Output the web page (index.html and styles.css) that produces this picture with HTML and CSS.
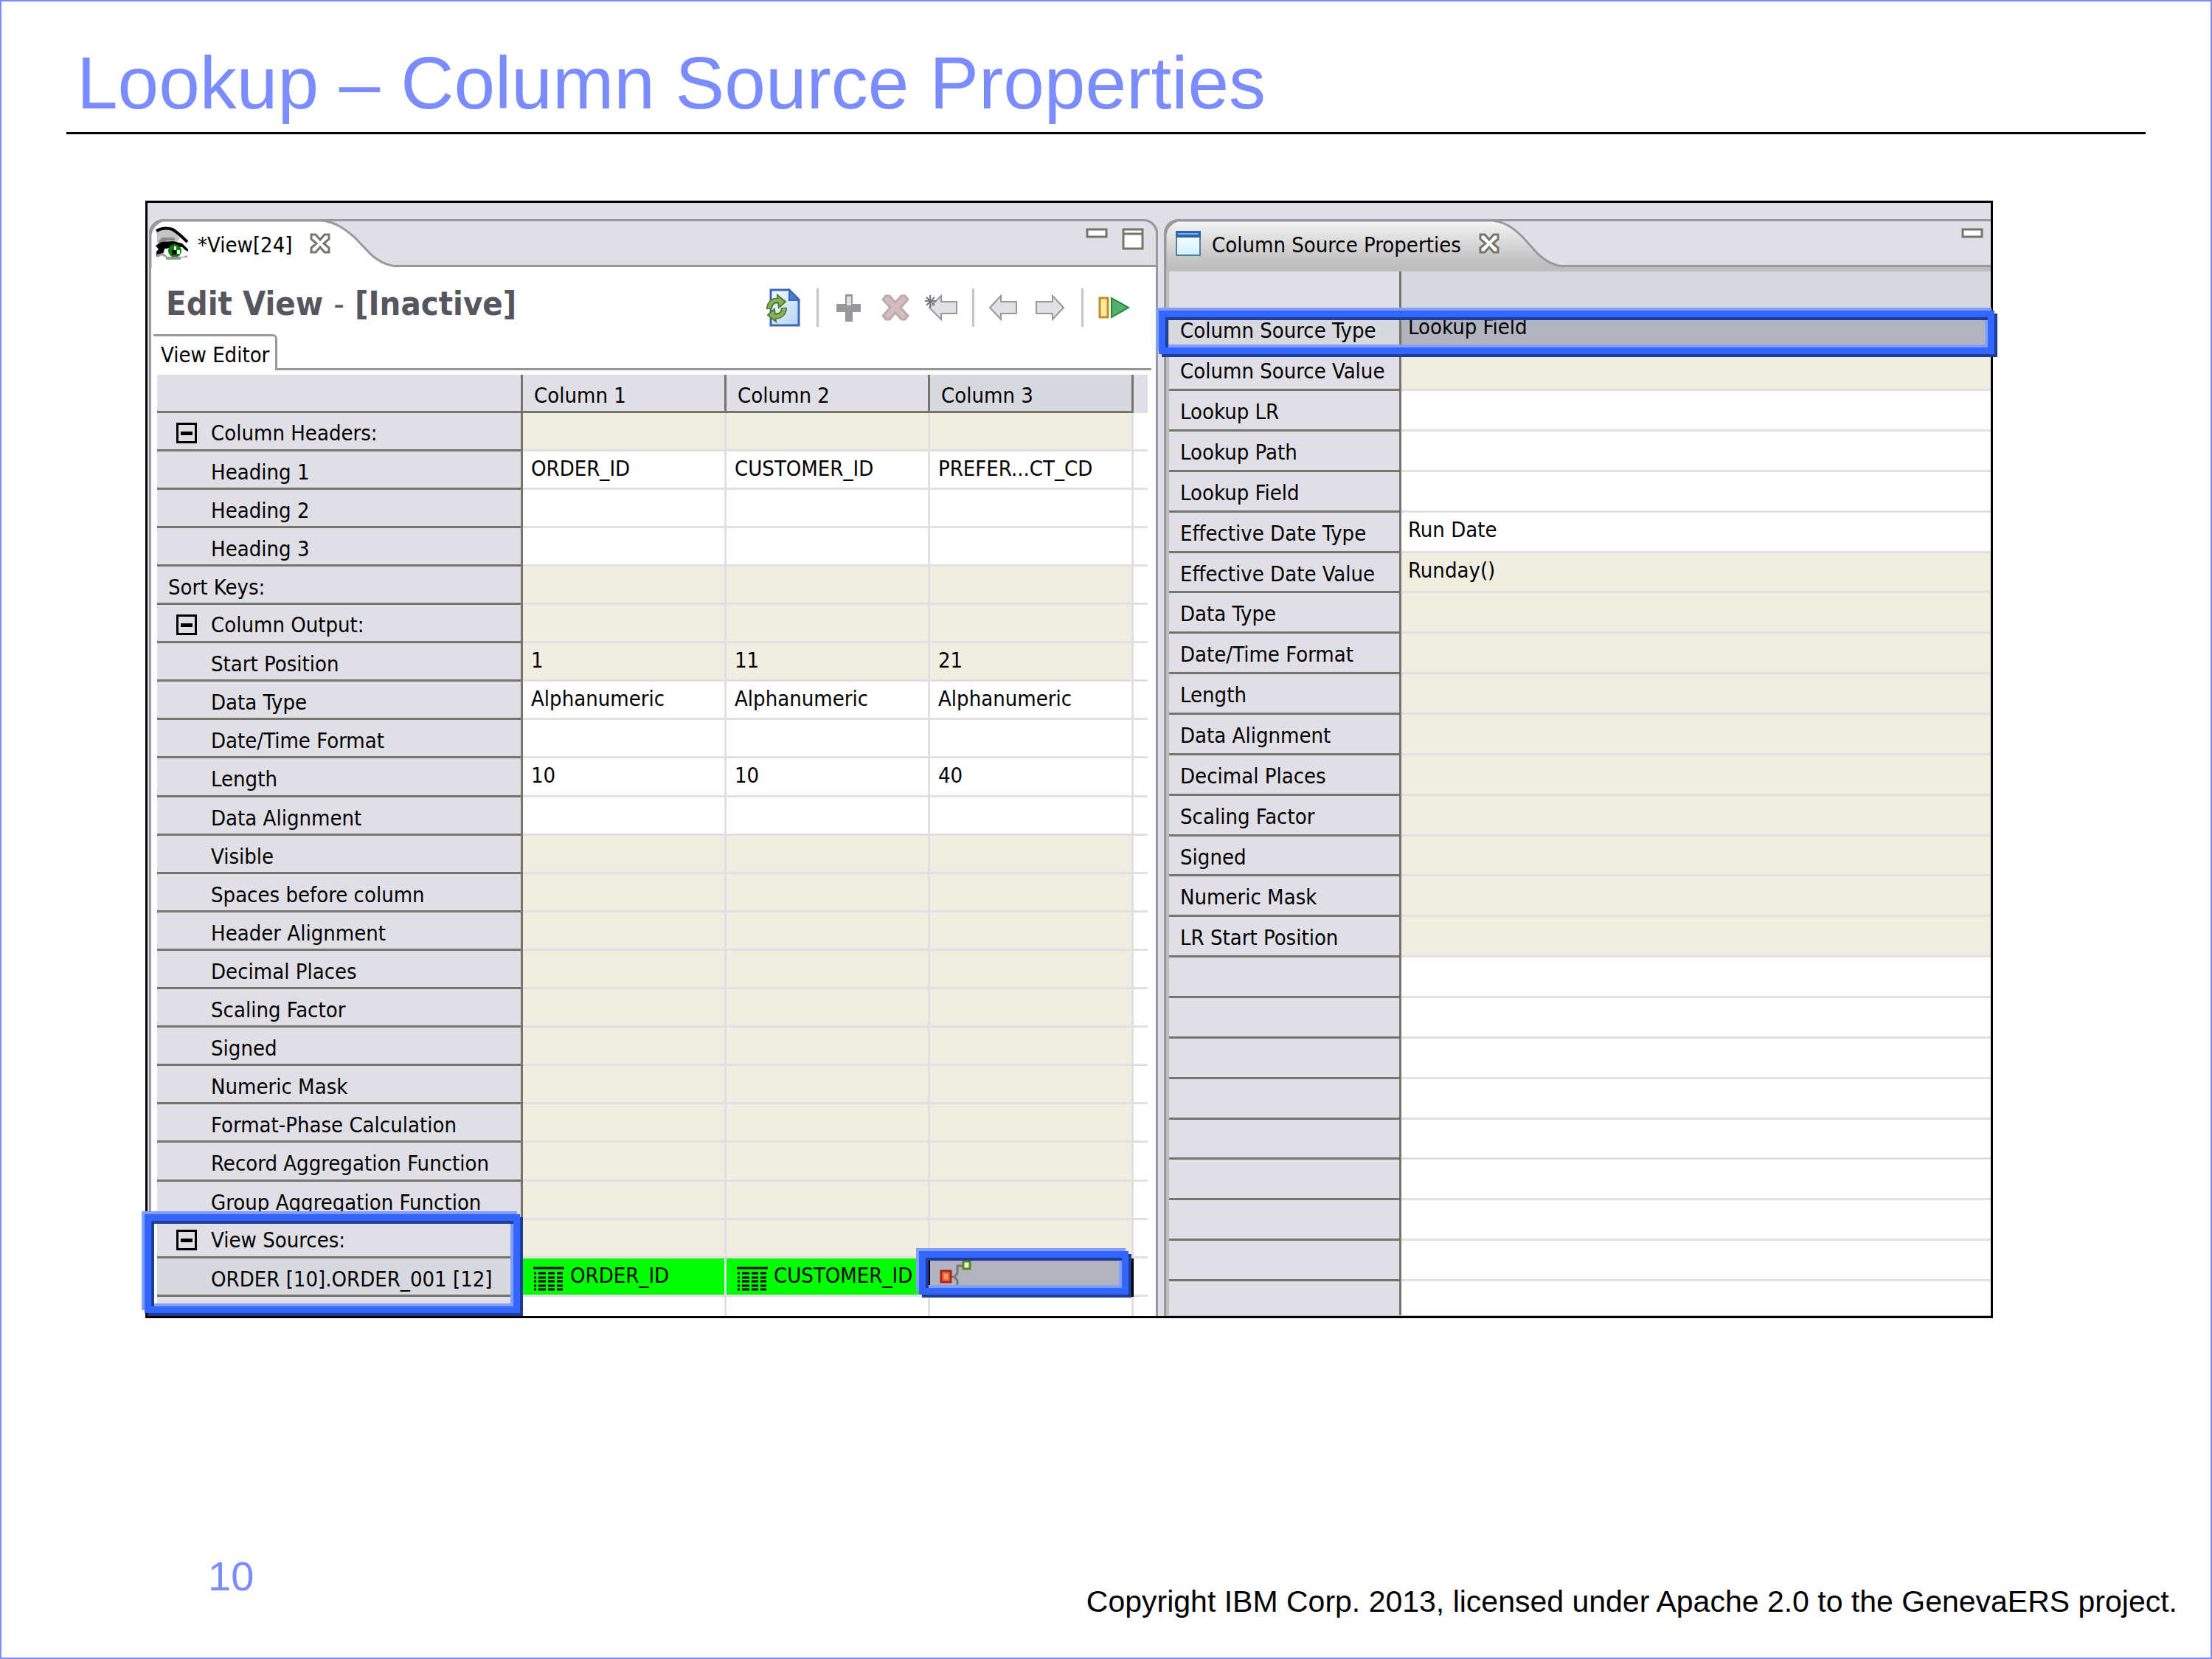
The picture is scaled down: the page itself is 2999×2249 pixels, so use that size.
FILE: index.html
```html
<!DOCTYPE html>
<html lang="en">
<head>
<meta charset="utf-8">
<title>Lookup – Column Source Properties</title>
<link rel="stylesheet" href="styles.css">
</head>
<body>
<main class="slide">
  <h1 class="slide-title">Lookup – Column Source Properties</h1>

  <div class="shot">
    <section class="panel editor">
      <div class="tabbar">
        <svg class="tab-shape" width="340" height="65" viewBox="0 0 340 65" aria-hidden="true"><path d="M1 65V18Q4 5 16 1H234C250 3 262 10 278 24L298 45C309 56 322 62 334 63V65Z" fill="#fff"/><path d="M1 65V20Q3 6 17 1H234C250 3 262 10 278 24L298 45C309 56 322 62 334 63" fill="none" stroke="#98989e" stroke-width="3"/></svg>
        <button class="tab">
          <svg width="44" height="44" viewBox="0 0 44 44" aria-hidden="true"><path d="M1 4L12 1L25 5L33 15L28 22L12 23L3 30Z" fill="#c4c4c4"/><path d="M8 14H26V18H15L8 25H4V20Z" fill="#888"/><path d="M1 5Q11-1 23 3Q31 8 43 20" fill="none" stroke="#000" stroke-width="4"/><path d="M0 25L8 20L24 19L36 22L44 30V33L36 29L12 29L14 36L9 35L1 40V33L4 30Z" fill="#000"/><path d="M12 30L21 27H36L43 34L38 40H16L10 36Z" fill="#fff"/><circle cx="26" cy="32" r="9" fill="#078007"/><path d="M22 31H28V37H22Z" fill="#000"/><path d="M25 26H28V31H33V36H29V31H25Z" fill="#fff"/><path d="M1 37L10 35L16 40H38L43 38V41H34V44H14V41L8 38L3 41Z" fill="#999"/></svg>
          <span>*View[24]</span>
        </button>
        <button class="close" aria-label="Close view"><svg width="28" height="28" viewBox="0 0 28 28"><path d="M2 2H8L14 9L20 2H26V8L19 14L26 20V26H20L14 19L8 26H2V20L9 14L2 8Z" fill="#fff" stroke="#77756b" stroke-width="3"/></svg></button>
        <div class="window-buttons">
          <button aria-label="Minimize"><svg width="28" height="28" viewBox="0 0 28 28"><path d="M1 1H27V11H1Z" fill="#fff" stroke="#77756b" stroke-width="3"/></svg></button>
          <button aria-label="Maximize"><svg width="28" height="28" viewBox="0 0 28 28"><path d="M1 1H27V27H1ZM1 7H27" fill="#fff" stroke="#77756b" stroke-width="3"/></svg></button>
        </div>
      </div>

      <div class="form-head">
        <h2>Edit View <span class="dash">-</span> [Inactive]</h2>
        <div class="toolbar">
          <button aria-label="Refresh"><svg width="44" height="50" viewBox="0 0 44 50"><defs><linearGradient id="page" x1="0" y1="0" x2="1" y2="1"><stop offset="0" stop-color="#f4fbff"/><stop offset="1" stop-color="#b4d4f4"/></linearGradient></defs><path d="M1 1H26L39 14V49H1Z" fill="url(#page)" stroke="#3d68ba" stroke-width="3"/><path d="M26 1V15H39Z" fill="#4c7dc5" stroke="#3d68ba" stroke-width="2"/><g fill="none" stroke="#527d2d" stroke-width="8"><path d="M-1 27A10 11 0 0 1 12 16"/><path d="M19 25A10 11 0 0 1 6 36"/></g><path d="M10 8L21 17L12 25ZM8 44L-3 35L6 27Z" fill="#8bb35c" stroke="#527d2d" stroke-width="2"/><g fill="none" stroke="#8bb35c" stroke-width="4"><path d="M-1 26A10 11 0 0 1 13 16"/><path d="M19 26A10 11 0 0 1 5 36"/></g></svg></button>
          <i class="sep"></i>
          <button aria-label="Add"><svg width="44" height="44" viewBox="0 0 44 44"><path d="M17 4H27V17H38V28H27V41H17V28H5V17H17Z" fill="#98989c"/><path d="M19 7H25V19H19Z" fill="#e2e2e5"/></svg></button>
          <button aria-label="Delete"><svg width="44" height="44" viewBox="0 0 44 44"><path d="M9 6H14L22 15L30 6H35L39 11L29 22L39 33L35 38H30L22 29L14 38H9L5 33L15 22L5 11Z" fill="#d8b9bc" stroke="#b8aeb0" stroke-width="3"/></svg></button>
          <button aria-label="Insert column before"><svg width="44" height="44" viewBox="0 0 44 44"><path d="M5 22L21 6V14H42V30H21V38Z" fill="#e1e0e5" stroke="#98989e" stroke-width="2"/><path d="M6 5V22M-1 13H14M1 8L12 19M12 8L1 19" stroke="#77777b" stroke-width="2"/></svg></button>
          <i class="sep"></i>
          <button aria-label="Move left"><svg width="44" height="44" viewBox="0 0 44 44"><path d="M2 22L17 6V14H38V30H17V38Z" fill="#e1e0e5" stroke="#98989e" stroke-width="2"/></svg></button>
          <button aria-label="Move right"><svg width="44" height="44" viewBox="0 0 44 44"><path d="M39 22L24 6V14H2V30H24V38Z" fill="#e1e0e5" stroke="#98989e" stroke-width="2"/></svg></button>
          <i class="sep"></i>
          <button aria-label="Activate"><svg width="44" height="44" viewBox="0 0 44 44"><path d="M3 9H14V35H3Z" fill="#ffeb9c" stroke="#c18e22" stroke-width="3"/><path d="M19 9L42 22L19 35Z" fill="#56b069" stroke="#23883f" stroke-width="2"/></svg></button>
        </div>
      </div>

      <div class="subtabs"><button class="subtab">View Editor</button></div>

      <table class="grid view-grid">
        <colgroup><col class="c-label"><col class="c-col"><col class="c-col"><col class="c-col"><col></colgroup>
        <thead><tr><th></th><th scope="col">Column 1</th><th scope="col">Column 2</th><th scope="col" class="current">Column 3</th><th class="rest"></th></tr></thead>
        <tbody>
          <tr class="ro"><th scope="row" class="group"><button class="toggle" aria-label="Collapse"></button>Column Headers:</th><td></td><td></td><td></td><td></td></tr>
          <tr><th scope="row">Heading 1</th><td>ORDER_ID</td><td>CUSTOMER_ID</td><td>PREFER...CT_CD</td><td></td></tr>
          <tr><th scope="row">Heading 2</th><td></td><td></td><td></td><td></td></tr>
          <tr><th scope="row">Heading 3</th><td></td><td></td><td></td><td></td></tr>
          <tr class="ro"><th scope="row" class="plain">Sort Keys:</th><td></td><td></td><td></td><td></td></tr>
          <tr class="ro"><th scope="row" class="group"><button class="toggle" aria-label="Collapse"></button>Column Output:</th><td></td><td></td><td></td><td></td></tr>
          <tr class="ro"><th scope="row">Start Position</th><td>1</td><td>11</td><td>21</td><td></td></tr>
          <tr><th scope="row">Data Type</th><td>Alphanumeric</td><td>Alphanumeric</td><td>Alphanumeric</td><td></td></tr>
          <tr><th scope="row">Date/Time Format</th><td></td><td></td><td></td><td></td></tr>
          <tr><th scope="row">Length</th><td>10</td><td>10</td><td>40</td><td></td></tr>
          <tr><th scope="row">Data Alignment</th><td></td><td></td><td></td><td></td></tr>
          <tr class="ro"><th scope="row">Visible</th><td></td><td></td><td></td><td></td></tr>
          <tr class="ro"><th scope="row">Spaces before column</th><td></td><td></td><td></td><td></td></tr>
          <tr class="ro"><th scope="row">Header Alignment</th><td></td><td></td><td></td><td></td></tr>
          <tr class="ro"><th scope="row">Decimal Places</th><td></td><td></td><td></td><td></td></tr>
          <tr class="ro"><th scope="row">Scaling Factor</th><td></td><td></td><td></td><td></td></tr>
          <tr class="ro"><th scope="row">Signed</th><td></td><td></td><td></td><td></td></tr>
          <tr class="ro"><th scope="row">Numeric Mask</th><td></td><td></td><td></td><td></td></tr>
          <tr class="ro"><th scope="row">Format-Phase Calculation</th><td></td><td></td><td></td><td></td></tr>
          <tr class="ro"><th scope="row">Record Aggregation Function</th><td></td><td></td><td></td><td></td></tr>
          <tr class="ro"><th scope="row">Group Aggregation Function</th><td></td><td></td><td></td><td></td></tr>
          <tr class="ro"><th scope="row" class="group"><button class="toggle" aria-label="Collapse"></button>View Sources:</th><td></td><td></td><td></td><td></td></tr>
          <tr><th scope="row" class="current">ORDER [10].ORDER_001 [12]</th>
            <td class="source"><svg width="42" height="34" viewBox="0 0 42 34" aria-hidden="true"><path d="M0 2H42" stroke="#000" stroke-width="3"/><path d="M1 9H40M1 15H40M1 20H40M1 26H40M1 31H40" stroke="#000" stroke-width="3" stroke-dasharray="3 3 10 3 9 3 8 9"/></svg>ORDER_ID</td>
            <td class="source"><svg width="42" height="34" viewBox="0 0 42 34" aria-hidden="true"><path d="M0 2H42" stroke="#000" stroke-width="3"/><path d="M1 9H40M1 15H40M1 20H40M1 26H40M1 31H40" stroke="#000" stroke-width="3" stroke-dasharray="3 3 10 3 9 3 8 9"/></svg>CUSTOMER_ID</td>
            <td class="selected"><svg width="44" height="40" viewBox="0 0 44 40" aria-hidden="true"><path d="M26 34V27L22 22L26 17V7H33M18 22H23" fill="none" stroke="#777" stroke-width="3"/><path d="M4 14H17V29H4Z" fill="#f26b3c" stroke="#b02318" stroke-width="3"/><path d="M8 18H13V25H8Z" fill="#ff9a66"/><path d="M34 1H43V11H34Z" fill="#e9f5cf" stroke="#5a8a1d" stroke-width="3"/></svg></td><td></td></tr>
          <tr class="cut"><th></th><td></td><td></td><td></td><td></td></tr>
        </tbody>
      </table>
    </section>

    <section class="panel props">
      <div class="tabbar">
        <svg class="tab-shape" width="550" height="65" viewBox="0 0 550 65" aria-hidden="true"><defs><linearGradient id="tabfill" x1="0" y1="0" x2="0" y2="1"><stop offset="0" stop-color="#f6f6f6"/><stop offset=".85" stop-color="#c2c2c2"/><stop offset="1" stop-color="#bdbdbd"/></linearGradient></defs><path d="M1 65V18Q4 5 16 1H445C461 3 472 10 486 24L505 45C516 56 528 62 540 63V65Z" fill="url(#tabfill)"/><path d="M1 65V20Q3 6 17 1H445C461 3 472 10 486 24L505 45C516 56 528 62 540 63" fill="none" stroke="#98989e" stroke-width="3"/></svg>
        <button class="tab">
          <svg width="34" height="34" viewBox="0 0 34 34" aria-hidden="true"><defs><linearGradient id="win" x1="0" y1="0" x2="0" y2="1"><stop offset="0" stop-color="#fff"/><stop offset="1" stop-color="#cdf1fb"/></linearGradient></defs><path d="M1 2H33V33H1Z" fill="url(#win)" stroke="#587a9b" stroke-width="2"/><path d="M0 0H34V9H0Z" fill="#2866ad"/><path d="M3 4H31" stroke="#7aaede" stroke-width="2"/></svg>
          <span>Column Source Properties</span>
        </button>
        <button class="close" aria-label="Close properties"><svg width="28" height="28" viewBox="0 0 28 28"><path d="M2 2H8L14 9L20 2H26V8L19 14L26 20V26H20L14 19L8 26H2V20L9 14L2 8Z" fill="#fff" stroke="#77756b" stroke-width="3"/></svg></button>
        <div class="window-buttons">
          <button aria-label="Minimize"><svg width="28" height="28" viewBox="0 0 28 28"><path d="M1 1H27V11H1Z" fill="#fff" stroke="#77756b" stroke-width="3"/></svg></button>
        </div>
      </div>
      <div class="props-body">
      <table class="grid props-grid">
        <colgroup><col class="c-prop"><col></colgroup>
        <thead><tr><th></th><th class="current"></th></tr></thead>
        <tbody>
          <tr><th scope="row" class="current">Column Source Type</th><td class="selected">Lookup Field</td></tr>
          <tr class="ro"><th scope="row">Column Source Value</th><td></td></tr>
          <tr><th scope="row">Lookup LR</th><td></td></tr>
          <tr><th scope="row">Lookup Path</th><td></td></tr>
          <tr><th scope="row">Lookup Field</th><td></td></tr>
          <tr><th scope="row">Effective Date Type</th><td>Run Date</td></tr>
          <tr class="ro"><th scope="row">Effective Date Value</th><td>Runday()</td></tr>
          <tr class="ro"><th scope="row">Data Type</th><td></td></tr>
          <tr class="ro"><th scope="row">Date/Time Format</th><td></td></tr>
          <tr class="ro"><th scope="row">Length</th><td></td></tr>
          <tr class="ro"><th scope="row">Data Alignment</th><td></td></tr>
          <tr class="ro"><th scope="row">Decimal Places</th><td></td></tr>
          <tr class="ro"><th scope="row">Scaling Factor</th><td></td></tr>
          <tr class="ro"><th scope="row">Signed</th><td></td></tr>
          <tr class="ro"><th scope="row">Numeric Mask</th><td></td></tr>
          <tr class="ro"><th scope="row">LR Start Position</th><td></td></tr>
          <tr><th></th><td></td></tr>
          <tr><th></th><td></td></tr>
          <tr><th></th><td></td></tr>
          <tr><th></th><td></td></tr>
          <tr><th></th><td></td></tr>
          <tr><th></th><td></td></tr>
          <tr><th></th><td></td></tr>
          <tr><th></th><td></td></tr>
          <tr class="cut"><th></th><td></td></tr>
        </tbody>
      </table>
      </div>
    </section>

    <div class="callout callout-type"></div>
    <div class="callout callout-sources"></div>
    <div class="callout callout-cell"></div>
  </div>

  <footer class="slide-footer">
    <span class="page-number">10</span>
    <p class="copyright">Copyright IBM Corp. 2013, licensed under Apache 2.0 to the GenevaERS project.</p>
  </footer>
</main>
</body>
</html>
```
FILE: styles.css
```css
* { box-sizing: border-box; }

body {
  margin: 0;
  background: #fff;
  color: #000;
  font-family: "Liberation Sans", Arial, sans-serif;
}

button {
  margin: 0;
  padding: 0;
  border: 0;
  background: none;
  color: inherit;
  font: inherit;
}

svg { display: block; overflow: visible; }

.slide {
  display: flex;
  flex-direction: column;
  min-height: 100vh;
  border: 2px solid #7a8cff;
}

.slide-title {
  margin: 52px 88px 0;
  padding: 0 14px 9px;
  border-bottom: 3px solid #000;
  color: #7a8cff;
  font-size: 100px;
  font-weight: 400;
  line-height: 116px;
}

/* Application window */
.shot {
  position: relative;
  display: grid;
  grid-template-columns: 1368px 1fr;
  gap: 8px;
  margin: 90px 295px 0 195px;
  padding: 22px 0 0 2px;
  border: 3px solid #000;
  background: #e0dfe5;
  font-family: "DejaVu Sans Condensed", "DejaVu Sans", sans-serif;
  font-size: 29px;
  line-height: 34px;
}

.panel { min-width: 0; }

.editor {
  border: solid #98989e;
  border-width: 0 3px 0 3px;
  border-radius: 20px 20px 0 0;
  background: #fff;
}

.props {
  border-left: 3px solid #98989e;
  border-radius: 20px 0 0 0;
  background: #bdbdbd;
}

.tabbar {
  position: relative;
  display: flex;
  align-items: flex-start;
  height: 65px;
  margin: 0 -3px;
  border: 3px solid #98989e;
  border-radius: 20px 20px 0 0;
  background: #e0dfe5;
}

.props .tabbar { margin-right: 0; border-right: 0; border-radius: 20px 0 0 0; }

.tab-shape { position: absolute; left: -2px; top: -2px; }

.tab {
  position: relative;
  display: flex;
  align-items: center;
  gap: 13px;
  height: 59px;
  padding-left: 6px;
}

.tab span { padding-top: 4px; }

.props .tab { gap: 15px; padding-left: 13px; }

.close { position: relative; margin: 16px 0 0 24px; }

.window-buttons {
  display: flex;
  gap: 21px;
  margin: 10px 17px 0 auto;
}

.props .window-buttons { margin-right: 11px; }

.form-head {
  display: flex;
  justify-content: space-between;
  align-items: center;
  height: 91px;
  padding: 8px 35px 0 20px;
}

.form-head h2 {
  margin: 0;
  color: #56565f;
  font-size: 45px;
  line-height: 52px;
}

.dash { font-weight: 400; }

.toolbar { display: flex; align-items: center; gap: 19px; height: 52px; margin-top: 10px; }
.sep { width: 3px; height: 52px; background: #c6c5cc; }

.subtabs {
  display: flex;
  height: 49px;
  margin: 0 6px 6px 3px;
  background: linear-gradient(#98989e, #98989e) right bottom / calc(100% - 165px) 3px no-repeat;
}

.subtab {
  width: 168px;
  padding: 4px 0 0 10px;
  border: solid #98989e;
  border-width: 3px 3px 0 0;
  border-top-right-radius: 6px;
  text-align: left;
  white-space: nowrap;
}

/* Data grids */
.grid {
  width: 100%;
  border-collapse: separate;
  border-spacing: 0;
  table-layout: fixed;
}

.grid th, .grid td {
  height: 52px;
  padding: 6px 0 0 11px;
  overflow: hidden;
  font-weight: 400;
  text-align: left;
  vertical-align: top;
  white-space: nowrap;
}

.grid td {
  border: solid #e0dfe4;
  border-width: 0 3px 3px 0;
  background: #fff;
}

.grid th {
  padding-top: 11px;
  border: solid #77756b;
  border-width: 0 3px 3px 0;
  background: #e0dfe5;
}

.grid .ro td { background: #f0eee1; }
.grid th.current { background: #d8d9df; }
.grid td.selected { background: #b1b3bf; }

.view-grid { width: calc(100% - 19px); margin-left: 8px; }
.c-label { width: 496px; }
.c-col { width: 276px; }

.view-grid tbody th { padding-left: 73px; }
.view-grid tbody th.plain { padding-left: 15px; }
.view-grid tbody th.group { padding-left: 26px; }
.view-grid thead th { padding-left: 15px; }
.view-grid thead .rest { border-width: 0; }
.grid td:last-child { border-right: 0; }
.view-grid .ro td:last-child { background: #fff; }
.view-grid tbody tr:nth-child(10n) > * { height: 53px; }

.toggle {
  width: 28px;
  height: 28px;
  margin-right: 19px;
  border: 3px solid #000;
  background: linear-gradient(#000, #000) center / 16px 5px no-repeat, #e0dfe5;
  vertical-align: -1px;
}

.view-grid th.group { line-height: 32px; }

.grid td.source { background: #0f0; }
.source svg { float: left; margin: 5px 8px 0 3px; }

.grid td.selected svg { margin-top: -3px; }
.view-grid td.selected,
.view-grid td:has(+ .selected) { border-right-color: #000; }
.view-grid td.selected { border-bottom-color: #000; }

.grid .cut > * { height: 26px; padding: 0; border-bottom: 0; }

.props-body { padding: 6px 0 0 4px; }
.c-prop { width: 315px; }
.props-grid th, .props-grid td { height: 55px; }
.props-grid tbody th { padding-left: 15px; }
.props-grid td { padding-left: 9px; }
.props-grid thead th { height: 52px; }
.props-grid th.current:last-child { border-right: 0; }
.props-grid tbody tr:nth-child(7n) > * { height: 54px; }
.props-grid .cut > * { height: 46px; }

/* Bevelled frames that point out parts of the window */
.callout {
  position: absolute;
  border: 9px solid #36f;
  box-shadow: -4px -4px #829ffb, 4px 4px #1f3c99, inset 4px 4px #1f3c99, inset -4px -4px #829ffb;
}

.callout-type { left: 1371px; right: -5px; top: 146px; height: 59px; }
.callout-sources { left: -4px; bottom: 4px; width: 509px; height: 134px; }
.callout-cell { left: 1046px; bottom: 29px; width: 284px; height: 59px; }

.slide-footer {
  display: flex;
  justify-content: space-between;
  align-items: flex-end;
  margin-top: auto;
  padding: 0 45px 52px 280px;
}

.page-number {
  padding-bottom: 26px;
  color: #7a8cff;
  font-size: 56px;
  line-height: 64px;
}

.copyright {
  margin: 0;
  font-size: 41px;
  line-height: 48px;
}
```
